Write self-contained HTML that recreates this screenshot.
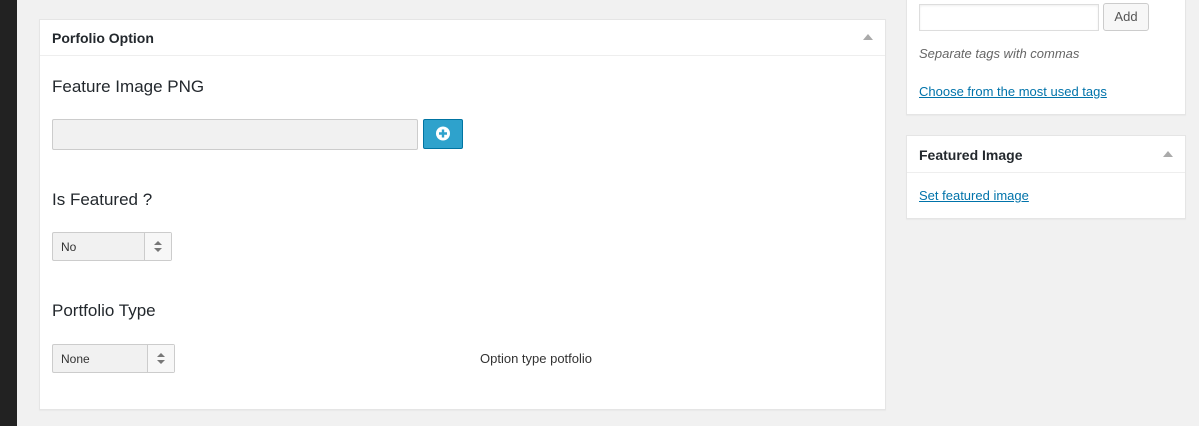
<!DOCTYPE html>
<html><head><style>
body{margin:0;width:1199px;height:426px;background:#f1f1f1;font-family:"Liberation Sans",sans-serif;position:relative;overflow:hidden;color:#23282d}
.a{position:absolute}
.box{background:#fff;border:1px solid #e5e5e5;box-shadow:0 1px 1px rgba(0,0,0,.04);box-sizing:border-box}
.sel{background:#f1f1f1;border:1px solid #ccc;border-radius:2px;box-sizing:border-box;font-size:12px;color:#333}
.arr{position:absolute;top:0;bottom:0;border-left:1px solid #ccc;background:#f7f7f7}
.arr:before{content:"";position:absolute;left:50%;top:8px;margin-left:-4px;border:4px solid transparent;border-bottom:4px solid #777;border-top:0}
.arr:after{content:"";position:absolute;left:50%;top:15px;margin-left:-4px;border:4px solid transparent;border-top:4px solid #777;border-bottom:0}
.lbl{font-size:17px;color:#23282d}
a{color:#0073aa;text-decoration:underline;font-size:13px}
.tri{width:0;height:0;border:5px solid transparent;border-bottom:6px solid #aaa;border-top:0}
</style></head><body>
<div class="a" style="left:0;top:0;width:17px;height:426px;background:#222"></div>
<div class="a box" style="left:39px;top:19px;width:847px;height:391px">
  <div class="a" style="left:0;right:0;top:35px;border-top:1px solid #eee"></div>
  <div class="a" style="left:12px;top:10px;font-size:14px;font-weight:bold">Porfolio Option</div>
  <div class="a tri" style="left:823px;top:14px"></div>
  <div class="a lbl" style="left:12px;top:57px">Feature Image PNG</div>
  <div class="a" style="left:12px;top:99px;width:366px;height:31px;background:#f1f1f1;border:1px solid #ccc;border-radius:2px;box-sizing:border-box"></div>
  <div class="a" style="left:383px;top:99px;width:40px;height:30px;background:#2ea2cc;border:1px solid #0074a2;border-radius:2px;box-sizing:border-box">
    <svg width="38" height="28" viewBox="0 0 38 28"><circle cx="19" cy="13.5" r="7" fill="#fff"/><path d="M19 9.5v8M15 13.5h8" stroke="#2ea2cc" stroke-width="2.4"/></svg>
  </div>
  <div class="a lbl" style="left:12px;top:170px">Is Featured ?</div>
  <div class="a sel" style="left:12px;top:212px;width:120px;height:29px"><span class="a" style="left:8px;top:7px">No</span><div class="arr" style="left:91px;right:0"></div></div>
  <div class="a lbl" style="left:12px;top:281px">Portfolio Type</div>
  <div class="a sel" style="left:12px;top:324px;width:123px;height:29px"><span class="a" style="left:8px;top:7px">None</span><div class="arr" style="left:94px;right:0"></div></div>
  <div class="a" style="left:440px;top:331px;font-size:13px;color:#333">Option type potfolio</div>
</div>
<div class="a box" style="left:906px;top:-10px;width:280px;height:125px">
  <div class="a" style="left:12px;top:13px;width:180px;height:27px;border:1px solid #ddd;box-sizing:border-box;box-shadow:inset 0 1px 2px rgba(0,0,0,.07)"></div>
  <div class="a" style="left:196px;top:12px;width:46px;height:28px;border:1px solid #ccc;border-radius:3px;background:#f7f7f7;box-sizing:border-box;font-size:13px;color:#555;text-align:center;line-height:26px">Add</div>
  <div class="a" style="left:12px;top:55px;font-size:13px;font-style:italic;color:#666">Separate tags with commas</div>
  <a class="a" style="left:12px;top:93px">Choose from the most used tags</a>
</div>
<div class="a box" style="left:906px;top:135px;width:280px;height:84px">
  <div class="a" style="left:0;right:0;top:36px;border-top:1px solid #eee"></div>
  <div class="a" style="left:12px;top:11px;font-size:14px;font-weight:bold">Featured Image</div>
  <div class="a tri" style="left:256px;top:15px"></div>
  <a class="a" style="left:12px;top:52px">Set featured image</a>
</div>
</body></html>
